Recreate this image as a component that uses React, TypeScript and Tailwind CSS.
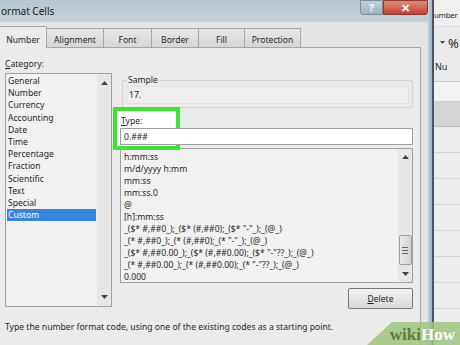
const categories = [
  "General",
  "Number",
  "Currency",
  "Accounting",
  "Date",
  "Time",
  "Percentage",
  "Fraction",
  "Scientific",
  "Text",
  "Special",
  "Custom",
];

const formats = [
  "h:mm:ss",
  "m/d/yyyy h:mm",
  "mm:ss",
  "mm:ss.0",
  "@",
  "[h]:mm:ss",
  '_($* #,##0_);_($* (#,##0);_($* "-"_);_(@_)',
  '_(* #,##0_);_(* (#,##0);_(* "-"_);_(@_)',
  '_($* #,##0.00_);_($* (#,##0.00);_($* "-"??_);_(@_)',
  '_(* #,##0.00_);_(* (#,##0.00);_(* "-"??_);_(@_)',
  "0.000",
];

const tabs = [
  { label: "Number", w: "w-[47px]", active: true },
  { label: "Alignment", w: "w-[57px]" },
  { label: "Font", w: "w-[48px]" },
  { label: "Border", w: "w-[47px]" },
  { label: "Fill", w: "w-[46px]" },
  { label: "Protection", w: "w-[56px]" },
];

function Arrow({ up }: { up?: boolean }) {
  return (
    <svg width="7" height="4" viewBox="0 0 7 4" className="text-[#444]">
      {up ? (
        <path d="M0 4 L3.5 0 L7 4 Z" fill="currentColor" />
      ) : (
        <path d="M0 0 L3.5 4 L7 0 Z" fill="currentColor" />
      )}
    </svg>
  );
}

export default function App() {
  return (
    <div className="w-[460px] h-[345px] overflow-hidden relative flex bg-[#e4e4e4] text-[#1f1f1f] font-['Noto_Sans',sans-serif] text-[8.6px] leading-[12px]">
      {/* Dialog */}
      <div className="w-[434px] shrink-0 flex">
        <div className="w-[428px] flex flex-col">
          {/* Title bar */}
          <div className="h-[22px] flex items-start bg-linear-to-b from-[#b3c5d3] to-[#c3d1dc] overflow-hidden">
            <span className="self-center pl-px text-[10px] text-[#1a1a1a]">ormat Cells</span>
            <div className="ml-auto flex">
              <div className="w-[23px] h-[15px] flex items-center justify-center bg-linear-to-b from-[#c2d0dc] to-[#9fb1c0] border border-[#7d8e9c] rounded-bl-[3px] text-[10px] font-bold text-white">
                ?
              </div>
              <div className="w-[45px] h-[15px] flex items-center justify-center bg-linear-to-b from-[#e08a7c] to-[#c4402e] border border-[#8a3a30] rounded-br-[3px] text-[11px] font-bold text-white">
                ✕
              </div>
            </div>
          </div>

          {/* Body */}
          <div className="flex-1 flex flex-col pt-[4px] pr-[7px]">
            {/* Tabs */}
            <div className="flex items-end h-[22px]">
              {tabs.map((t) =>
                t.active ? (
                  <div
                    key={t.label}
                    className={`${t.w} h-[22px] flex items-center justify-center pt-[4px] bg-[#ebebeb] border-r border-t border-[#a5a5a5] rounded-tr-[2px]`}
                  >
                    {t.label}
                  </div>
                ) : (
                  <div
                    key={t.label}
                    className={`${t.w} h-[20px] flex items-center justify-center pt-[3px] bg-linear-to-b from-[#e8e8e8] to-[#d6d6d6] border-r border-t border-b border-[#a5a5a5]`}
                  >
                    {t.label}
                  </div>
                )
              )}
              <div className="flex-1 border-b border-[#a5a5a5]" />
            </div>

            {/* Panel */}
            <div className="flex-1 flex flex-col bg-[#ebebeb] border-r border-[#a5a5a5] pl-[5px] pt-[10px]">
              <div className="flex items-start">
                {/* Category */}
                <div className="w-[107px] flex flex-col">
                  <span className="h-[12px]">
                    <span className="underline">C</span>ategory:
                  </span>
                  <div className="mt-[3px] h-[234px] flex border border-[#a0a0a0] bg-[#f1f1f1]">
                    <div className="flex-1 p-[1px]">
                      {categories.map((c) => (
                        <div
                          key={c}
                          className={`h-[12.2px] leading-[12.2px] px-[1px] ${
                            c === "Custom" ? "bg-[#3a85d8] text-white" : ""
                          }`}
                        >
                          {c}
                        </div>
                      ))}
                    </div>
                    <div className="w-[14px] flex flex-col items-center justify-between bg-[#e7e7e7] py-[7px]">
                      <Arrow up />
                      <Arrow />
                    </div>
                  </div>
                </div>

                {/* Right column */}
                <div className="ml-[8px] w-[293px] flex flex-col mt-[16px]">
                  <fieldset className="ml-[2px] h-[34px] border border-[#d0d0d0] rounded-[2px] px-[3px] pb-[3px]">
                    <legend className="ml-[1px] px-[1px] leading-[12px]">Sample</legend>
                    <div className="h-[18px] flex items-center pl-[2px] bg-[#eeeeee] border border-[#e0e0e0]">
                      17.
                    </div>
                  </fieldset>

                  <div className="relative mt-[7px] flex flex-col">
                    <div className="absolute -left-[7px] -top-[8px] w-[67px] h-[43px] bg-white border-[4px] border-[#3fe13c]" />
                    <span className="relative h-[12px] pl-[1px]">
                      <span className="underline">T</span>ype:
                    </span>
                    <div className="relative mt-[1px] h-[17px] flex items-center pl-[3px] bg-white border border-[#a0a0a0]">
                      0.###
                    </div>
                  </div>

                  <div className="mt-[3px] h-[135px] flex border border-[#a0a0a0] bg-[#f1f1f1]">
                    <div className="flex-1 pt-[2px] pl-[3px] whitespace-nowrap overflow-hidden">
                      {formats.map((f) => (
                        <div key={f} className="h-[12px] leading-[12px]">
                          {f}
                        </div>
                      ))}
                    </div>
                    <div className="w-[14px] flex flex-col items-center bg-[#e7e7e7] pt-[6px] pb-[6px]">
                      <Arrow up />
                      <div className="mt-[76px] w-[13px] h-[30px] flex flex-col items-center justify-center gap-[2px] bg-linear-to-r from-[#e9e9e9] to-[#d3d3d3] border border-[#9d9d9d] rounded-[2px]">
                        <div className="w-[6px] h-px bg-[#666]" />
                        <div className="w-[6px] h-px bg-[#666]" />
                        <div className="w-[6px] h-px bg-[#666]" />
                      </div>
                      <div className="mt-auto">
                        <Arrow />
                      </div>
                    </div>
                  </div>

                  <div className="self-end mt-[5px] w-[65px] h-[21px] flex items-center justify-center bg-linear-to-b from-[#f3f3f3] to-[#d9d9d9] border border-[#777] rounded-[2px]">
                    <span>
                      <span className="underline">D</span>elete
                    </span>
                  </div>
                </div>
              </div>

              <p className="mt-[12px]">
                Type the number format code, using one of the existing codes as a starting point.
              </p>
            </div>
          </div>
        </div>
        {/* Window frame */}
        <div className="w-[6px] bg-linear-to-r from-[#c3d2de] to-[#9db3c6] border-r-2 border-[#4d545b]" />
      </div>

      {/* Excel behind */}
      <div className="flex-1 flex flex-col bg-[#eaeaea] overflow-hidden whitespace-nowrap">
        <div className="h-[27px] shrink-0 flex items-start pt-[9px] bg-[#f0f0f0] border-b border-[#dadada]">
          <span className="text-[7.8px] leading-[12px] tracking-[-0.2px]">umber</span>
        </div>
        <div className="h-[27px] shrink-0 flex items-center gap-[3px] pl-[6px] pt-[4px]">
          <svg width="5" height="3" viewBox="0 0 5 3">
            <path d="M0 0 L2.5 3 L5 0 Z" fill="#444" />
          </svg>
          <span className="text-[13px] leading-[14px]">%</span>
        </div>
        <div className="h-[28px] shrink-0 flex items-start pt-[7px] text-[9px] border-b border-[#c9c9c9]">
          <span className="pl-px">Nu</span>
        </div>
        <div className="h-[20px] shrink-0 bg-[#f2f2f2] border-b border-[#c9c9c9]" />
        <div className="h-[25px] shrink-0 bg-[#d4d4d4] border-b border-[#bdbdbd]" />
        {Array.from({ length: 9 }).map((_, i) => (
          <div key={i} className="h-[26px] shrink-0 bg-[#ededed] border-b border-[#d4d4d4]" />
        ))}
      </div>

      {/* wikiHow watermark */}
      <div className="absolute right-0 bottom-0 w-[93px] h-[23px] bg-[#9fc47f]/85 [clip-path:polygon(25px_0,100%_0,100%_100%,0_100%)] flex items-end justify-end pr-[5px]">
        <span className="font-['Liberation_Serif',serif] font-bold text-[17px] leading-[20px]">
          <span className="text-[#5b7d3b]">wiki</span>
          <span className="text-white">How</span>
        </span>
      </div>
    </div>
  );
}
